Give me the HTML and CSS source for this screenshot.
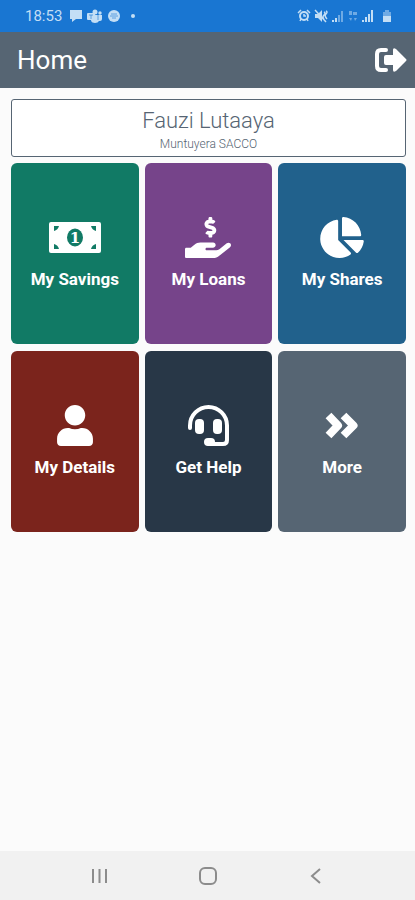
FILE: index.html
```
<!DOCTYPE html>
<html lang="en">
<head>
  <meta charset="UTF-8" />
  <meta name="viewport" content="width=device-width, initial-scale=1" />
  <title>Home</title>
  <link rel="stylesheet" href="styles.css">
</head>
<body>

<div class="status">
  <span class="time">18:53</span>
  <div class="notices">
    <svg width="14" height="14" viewBox="0 0 14 14"><path d="M1 1h12v9H7l-4 3v-3H1z"/></svg>
    <svg width="16" height="14" viewBox="0 0 16 14"><circle cx="8" cy="3" r="2.5"/><circle cx="13" cy="4" r="1.7"/><path d="M5 6h10v4q0 2-2 2h-1q-1 2-4 2-3 0-4-2z"/><rect y="4" width="8" height="7" rx="1"/><path class="cut" d="M2 6h4M4 6v4M11 6v5"/></svg>
    <svg width="14" height="14" viewBox="0 0 14 14"><circle cx="7" cy="7" r="6"/><path class="cut" d="M4 5h6M3 7h8M5 9h4"/></svg>
    <svg class="dot" width="4" height="4" viewBox="0 0 4 4"><circle cx="2" cy="2" r="2"/></svg>
  </div>
  <div class="signals">
    <svg width="14" height="14" viewBox="0 0 14 14"><circle class="ring" cx="7" cy="7" r="4"/><path class="line" d="M1 4l3-3M13 4l-3-3M3 12l1-2M11 12l-1-2M7 5v2h2"/></svg>
    <svg width="14" height="14" viewBox="0 0 14 14"><path d="M1 5h3l4-4v12L4 9H1z"/><path class="line" d="M1 1l11 12M10 3q2 1 0 3t0 4M12 2q2 1 0 3t1 5"/></svg>
    <svg width="14" height="14" viewBox="0 0 14 14"><path d="M1 11h2v2H1zM4 9h2v4H4z"/><path class="dim" d="M7 6h2v7H7zM10 2h2v11h-2z"/></svg>
    <svg width="10" height="14" viewBox="0 0 10 14"><path class="dim" d="M1 2h3v4H1zM5 3h4v3H5zM1 9h3l-1 3zM6 9h3l-2 3z"/></svg>
    <svg width="14" height="14" viewBox="0 0 14 14"><path d="M1 11h2v2H1zM4 8h2v5H4zM7 5h2v8H7zM10 1h2v12h-2z"/></svg>
    <svg class="battery" width="10" height="14" viewBox="0 0 10 14"><path class="dim" d="M1 3h2V1h4v2h2v4H1z"/><path d="M1 7h8v6H1z"/></svg>
  </div>
</div>

<header class="topbar">
  <h1>Home</h1>
  <button class="logout" type="button" aria-label="Log out">
    <svg width="32" height="24" viewBox="0 0 32 24">
      <path class="bracket" d="M11 2H6Q2 2 2 6v12q0 4 4 4h5"/>
      <path d="M9 9q0-2 2-2h7V2q0-3 3-1l10 10q1 1 0 2L21 23q-3 2-3-1v-5h-7q-2 0-2-2z"/>
    </svg>
  </button>
</header>

<main>
  <section class="member">
    <h2>Fauzi Lutaaya</h2>
    <p>Muntuyera SACCO</p>
  </section>

  <div class="tiles">
    <button class="tile savings" type="button">
      <svg width="52" height="41" viewBox="0 0 52 41">
        <rect x="0" y="5" width="52" height="31" rx="2"/>
        <path class="hole" d="M5 9h5q-1 4-5 5zM47 9h-5q1 4 5 5zM5 32h5q-1-4-5-5zM47 32h-5q1-4 5-5z"/>
        <ellipse class="hole" cx="26" cy="20.5" rx="8" ry="9"/>
        <text x="26" y="26" text-anchor="middle">1</text>
      </svg>
      <span>My Savings</span>
    </button>
    <button class="tile loans" type="button">
      <svg width="46" height="41" viewBox="0 0 576 512">
        <path d="M287.600 144.300l50 14.300c3.600 1 6.100 4.400 6.100 8.100 0 4.600-3.800 8.400-8.400 8.400h-32.800c-3.600 0-7.100-.8-10.300-2.200-4.800-2.200-10.400-1.700-14.100 2l-17.500 17.500c-5.300 5.300-4.700 14.300 1.500 18.400 9.500 6.300 20.300 10.100 31.800 11.500V240c0 8.800 7.200 16 16 16h16c8.800 0 16-7.200 16-16v-17.600c30.300-3.600 53.300-31 49.300-63-2.900-23-20.700-41.300-42.900-47.700l-50-14.300c-3.600-1-6.100-4.400-6.100-8.100 0-4.600 3.800-8.400 8.400-8.400h32.800c3.600 0 7.100.8 10.300 2.200 4.800 2.200 10.400 1.700 14.100-2l17.500-17.500c5.300-5.300 4.700-14.300-1.500-18.400-9.500-6.300-20.300-10.100-31.800-11.500V16c0-8.800-7.200-16-16-16h-16c-8.800 0-16 7.200-16 16v17.600c-30.300 3.600-53.300 31-49.300 63 2.900 23 20.600 41.300 42.900 47.700z"/>
        <path d="M565.300 328.100c-11.800-10.700-30.200-10-42.600 0L430.300 402c-11.300 9.100-25.400 14-40 14H272c-8.800 0-16-7.200-16-16s7.200-16 16-16h78.300c15.900 0 30.700-10.900 33.300-26.600 3.300-20-12.100-37.400-31.600-37.400H192c-27 0-53.100 9.300-74.100 26.300L71.400 384H16c-8.800 0-16 7.200-16 16v96c0 8.800 7.200 16 16 16h356.800c14.500 0 28.600-4.900 40-14L564 377c15.200-12.100 16.400-35.300 1.300-48.900z"/>
      </svg>
      <span>My Loans</span>
    </button>
    <button class="tile shares" type="button">
      <svg width="44" height="41" viewBox="0 0 544 512">
        <path d="M527.790 288H290.500l158.030 158.030c6.040 6.040 15.980 6.530 22.190.68 38.700-36.460 65.320-85.610 73.130-140.860 1.340-9.460-6.510-17.850-16.060-17.850zm-15.830-64.800C503.720 103.740 408.260 8.280 288.800.04 279.680-.59 272 7.100 272 16.240V240h223.770c9.140 0 16.820-7.680 16.190-16.800zM224 288V50.710c0-9.550-8.390-17.400-17.840-16.060C86.990 51.490-4.100 155.600.14 280.370 4.500 408.510 114.830 512.960 243.030 511.360c50.400-.63 96.970-16.870 135.260-44.030 7.900-5.600 8.420-17.230 1.570-24.080L224 288z"/>
      </svg>
      <span>My Shares</span>
    </button>
    <button class="tile details" type="button">
      <svg width="36" height="41" viewBox="0 0 448 512">
        <path d="M224 256c70.700 0 128-57.300 128-128S294.700 0 224 0 96 57.300 96 128s57.300 128 128 128zm89.600 32h-16.700c-22.200 10.200-46.900 16-72.900 16s-50.600-5.800-72.900-16h-16.700C60.200 288 0 348.200 0 422.400V464c0 26.500 21.500 48 48 48h352c26.500 0 48-21.500 48-48v-41.600c0-74.200-60.200-134.400-134.400-134.400z"/>
      </svg>
      <span>My Details</span>
    </button>
    <button class="tile help" type="button">
      <svg width="41" height="41" viewBox="0 0 41 41">
        <path class="band" d="M2 23v-2.500a18.500 18.500 0 0 1 37 0V35q0 4-4 4H21"/>
        <rect x="7" y="14" width="9" height="15" rx="4"/>
        <rect x="25" y="14" width="9" height="15" rx="4"/>
        <rect x="16" y="33" width="11" height="8" rx="4"/>
      </svg>
      <span>Get Help</span>
    </button>
    <button class="tile more" type="button">
      <svg width="34" height="41" viewBox="0 0 34 41">
        <path class="chevron" d="M3.500 10.500L13 20.500L3.500 30.500M18.500 10.500L28.500 20.500L18.500 30.500"/>
      </svg>
      <span>More</span>
    </button>
  </div>
</main>

<nav class="navbar">
  <button type="button" aria-label="Recent apps"><svg width="18" height="18" viewBox="0 0 18 18"><path d="M2 2v14M8.500 2v14M15 2v14"/></svg></button>
  <button type="button" aria-label="Home screen"><svg width="18" height="18" viewBox="0 0 18 18"><rect x="1" y="1" width="16" height="16" rx="5"/></svg></button>
  <button type="button" aria-label="Back"><svg width="18" height="18" viewBox="0 0 18 18"><path d="M13 2L5 9l8 7"/></svg></button>
</nav>

</body>
</html>
```
FILE: styles.css
```
* {
  box-sizing: border-box;
}
body {
  font-family: Roboto, sans-serif;
  margin: 0;
  min-height: 100vh;
  display: flex;
  flex-direction: column;
  background: #fbfbfb;
  color: #566573;
}
h1, h2, p {
  margin: 0;
}
button {
  font-family: inherit;
  border: none;
  padding: 0;
  cursor: pointer;
}
svg {
  display: block;
}

/* status bar */
.status {
  height: 32px;
  padding: 0 23px 0 25px;
  display: flex;
  align-items: center;
  background: #1976d2;
  color: #c3def5;
}
.status svg {
  fill: #c3def5;
}
.status .dim {
  opacity: 0.5;
}
.status .cut {
  fill: none;
  stroke: #1976d2;
  opacity: 0.6;
}
.status .line, .status .ring {
  fill: none;
  stroke: #c3def5;
  stroke-width: 1.5;
}
.status .ring {
  stroke-width: 2;
}
.time {
  font-size: 15px;
}
.notices, .signals {
  display: flex;
  align-items: center;
}
.notices {
  gap: 4px;
  margin-left: 7px;
}
.notices .dot {
  margin-left: 6px;
}
.signals {
  gap: 3px;
  margin-left: auto;
}
.signals .battery {
  margin-left: 4px;
}

/* app bar */
.topbar {
  height: 56px;
  padding: 0 8px 0 17px;
  display: flex;
  align-items: center;
  justify-content: space-between;
  background: #566573;
  color: white;
}
.topbar h1 {
  font-size: 26px;
  line-height: 32px;
  font-weight: 400;
}
.logout {
  background: none;
}
.logout svg {
  fill: white;
}
.logout .bracket {
  fill: none;
  stroke: white;
  stroke-width: 4;
  stroke-linecap: round;
}

main {
  flex: 1;
  padding: 11px 9px 11px 11px;
}
.member {
  border: 1px solid #566573;
  border-radius: 3px;
  background: white;
  padding: 6px 0 4px;
  margin-bottom: 6px;
  text-align: center;
}
.member h2 {
  font-size: 22px;
  line-height: 30px;
  font-weight: 300;
}
.member p {
  font-size: 12px;
  line-height: 16px;
  font-weight: 300;
}

.tiles {
  display: grid;
  grid-template-columns: repeat(3, 1fr);
  gap: 7px 6px;
}
.tile {
  padding: 54px 0;
  display: flex;
  flex-direction: column;
  align-items: center;
  gap: 10px;
  border-radius: 6px;
  color: white;
  font-size: 17px;
  line-height: 22px;
  font-weight: 700;
}
.tile svg {
  fill: white;
}
.savings { background: #117a65; }
.loans { background: #76448a; }
.shares { background: #21618c; }
.details { background: #7b241c; }
.help { background: #283747; }
.more { background: #566573; }

.savings .hole {
  fill: #117a65;
}
.savings text {
  font-family: "DejaVu Serif", serif;
  font-size: 15px;
  font-weight: 700;
}
.help .band {
  fill: none;
  stroke: white;
  stroke-width: 4;
  stroke-linecap: round;
}
.more .chevron {
  fill: none;
  stroke: white;
  stroke-width: 8;
  stroke-linejoin: round;
}

/* phone navigation */
.navbar {
  height: 49px;
  display: flex;
  align-items: center;
  justify-content: center;
  gap: 64px;
  background: #f1f1f1;
}
.navbar button {
  width: 44px;
  height: 44px;
  display: flex;
  align-items: center;
  justify-content: center;
  background: none;
}
.navbar svg {
  fill: none;
  stroke: #8c8c8c;
  stroke-width: 2;
}
```
